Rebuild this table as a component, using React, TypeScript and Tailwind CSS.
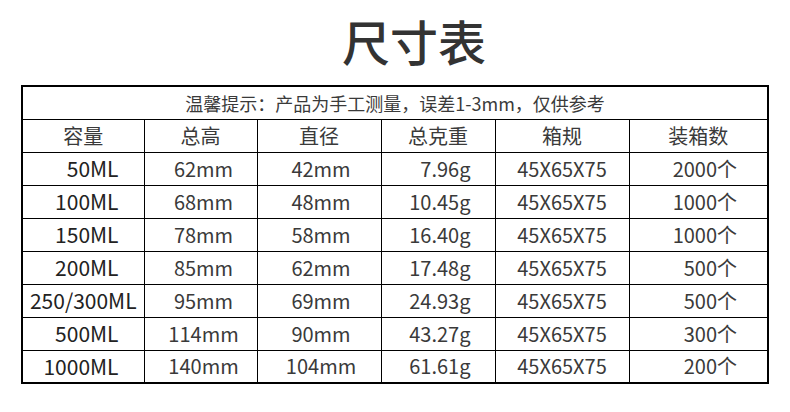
import React from "react";

// Size chart: capacity, height, diameter, weight, carton size, pcs per carton
const rows = [
  ["50ML", "62mm", "42mm", "7.96g", "45X65X75", "2000个"],
  ["100ML", "68mm", "48mm", "10.45g", "45X65X75", "1000个"],
  ["150ML", "78mm", "58mm", "16.40g", "45X65X75", "1000个"],
  ["200ML", "85mm", "62mm", "17.48g", "45X65X75", "500个"],
  ["250/300ML", "95mm", "69mm", "24.93g", "45X65X75", "500个"],
  ["500ML", "114mm", "90mm", "43.27g", "45X65X75", "300个"],
  ["1000ML", "140mm", "104mm", "61.61g", "45X65X75", "200个"],
];

const headers = ["容量", "总高", "直径", "总克重", "箱规", "装箱数"];

export default function App() {
  return (
    <div
      className="w-[790px] h-[412px] bg-white text-[#333]"
      style={{ fontFamily: '"Noto Sans CJK SC", "Noto Sans", sans-serif' }}
    >
      {/* Title */}
      <div className="h-[85px] pl-[38px] pt-[8px] text-center text-[48px] leading-[64px] font-medium">
        尺寸表
      </div>

      {/* Table */}
      <table className="ml-[21px] w-[746px] table-fixed border-collapse border-2 border-black text-[20px] text-[#3a3a3a]">
        <colgroup>
          <col className="w-[122px]" />
          <col className="w-[113px]" />
          <col className="w-[124px]" />
          <col className="w-[114px]" />
          <col className="w-[134px]" />
          <col className="w-[139px]" />
        </colgroup>
        <tbody>
          <tr className="h-[33px]">
            <td colSpan={6} className="border border-black text-center text-[18px] leading-none">
              温馨提示：产品为手工测量，误差1-3mm，仅供参考
            </td>
          </tr>
          <tr className="h-[33px]">
            {headers.map((h) => (
              <td key={h} className="border border-black text-center leading-none">
                {h}
              </td>
            ))}
          </tr>
          {rows.map((r) => (
            <tr key={r[0]} className="h-[33px]">
              <td
                className={
                  r[0] === "250/300ML"
                    ? "border border-black text-center text-[21px] text-[#222] leading-none whitespace-nowrap"
                    : "border border-black text-right pr-[25px] text-[21px] text-[#222] leading-none"
                }
              >
                {r[0]}
              </td>
              <td className="border border-black text-center pl-[6px] leading-none">{r[1]}</td>
              <td className="border border-black text-center pl-[4px] leading-none">{r[2]}</td>
              <td className="border border-black text-right pr-[24px] leading-none">{r[3]}</td>
              <td className="border border-black text-center leading-none">{r[4]}</td>
              <td className="border border-black text-right pr-[30px] leading-none">{r[5]}</td>
            </tr>
          ))}
        </tbody>
      </table>
    </div>
  );
}
